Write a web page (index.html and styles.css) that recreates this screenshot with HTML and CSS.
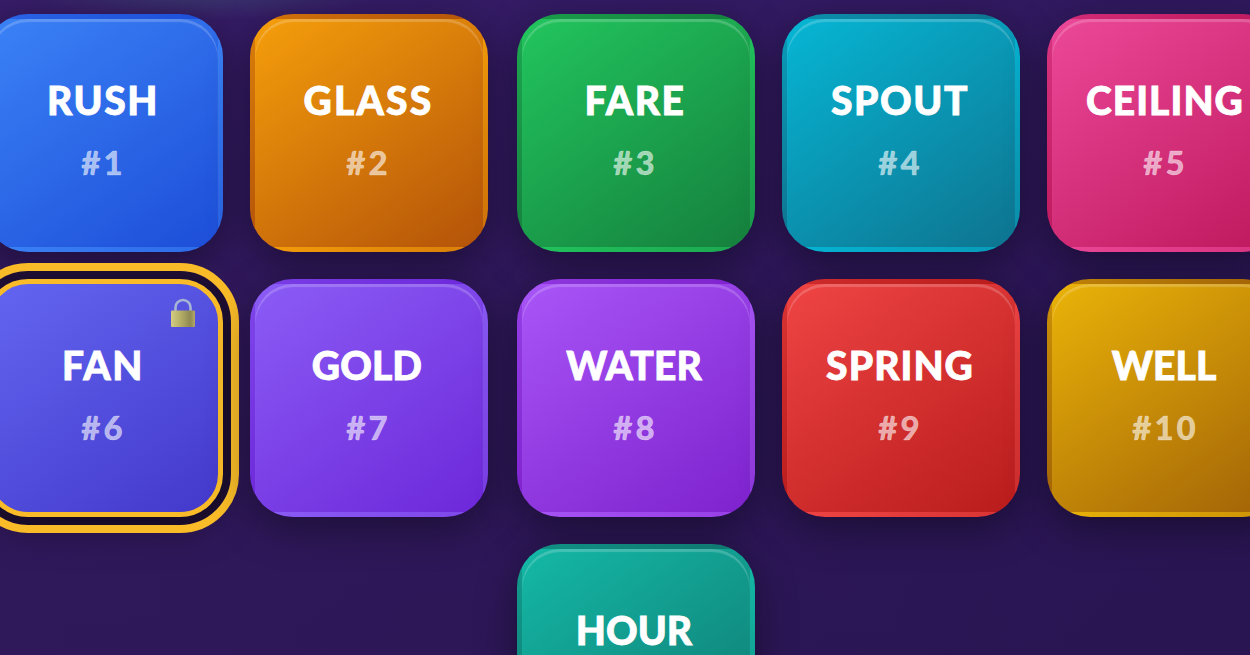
FILE: index.html
```html
<!DOCTYPE html>
<html lang="en">
<head>
<meta charset="utf-8">
<title>Word tiles</title>
<link rel="stylesheet" href="styles.css">
</head>
<body>
<main class="board">
  <div class="tile blue"><span class="word">RUSH</span><span class="num">#1</span></div>
  <div class="tile amber"><span class="word loose">GLASS</span><span class="num">#2</span></div>
  <div class="tile green"><span class="word">FARE</span><span class="num">#3</span></div>
  <div class="tile cyan"><span class="word">SPOUT</span><span class="num">#4</span></div>
  <div class="tile pink"><span class="word snug">CEILING</span><span class="num">#5</span></div>
  <div class="tile indigo selected"><span class="word">FAN</span><span class="num">#6</span>
    <svg class="lock" viewBox="0 0 28 30">
      <defs><linearGradient id="brass" x1="0" x2="1" y1="0" y2="0"><stop offset="0" stop-color="#d3cc83"/><stop offset=".35" stop-color="#b9b269"/><stop offset=".8" stop-color="#8f8852"/><stop offset="1" stop-color="#b3a968"/></linearGradient></defs>
      <path d="M6.500 14V9.500a7.500 7.500 0 0 1 15 0V14" fill="none" stroke="#a7b4d6" stroke-width="2.600"/>
      <rect x="2" y="12.500" width="24" height="16.500" rx="1" fill="url(#brass)"/>
    </svg>
  </div>
  <div class="tile violet"><span class="word tight">GOLD</span><span class="num">#7</span></div>
  <div class="tile purple"><span class="word tight">WATER</span><span class="num">#8</span></div>
  <div class="tile red"><span class="word snug">SPRING</span><span class="num">#9</span></div>
  <div class="tile yellow"><span class="word tight">WELL</span><span class="num">#10</span></div>
  <div class="tile teal last"><span class="word tight">HOUR</span></div>
</main>
</body>
</html>
```
FILE: styles.css
```css
* { box-sizing: border-box; }
body {
  margin: 0;
  height: 655px;
  overflow: hidden;
  font-family: Lato, "Liberation Sans", sans-serif;
  background:
    radial-gradient(ellipse 180px 24px at 200px -4px, rgba(64, 105, 120, .32), transparent),
    linear-gradient(100deg, rgba(60, 30, 110, .25), rgba(30, 15, 70, .25)),
    linear-gradient(#351c66 0, #2f1859 45%, #2c1755 100%);
}
.board {
  display: grid;
  grid-template-columns: 238px 240px 238px 238px 238px;
  grid-auto-rows: 238px;
  gap: 27px;
  margin-left: -15.500px;
  padding-top: 13.500px;
  width: 1310px;
  height: 655px;
}
.tile {
  position: relative;
  width: 238px;
  height: 238px;
  border: 5px solid transparent;
  border-radius: 43px;
  padding-top: 57px;
  display: flex;
  flex-direction: column;
  align-items: center;
  color: #fff;
  background-image: linear-gradient(145deg, var(--from), var(--to));
  box-shadow: 0 11px 40px rgba(0, 0, 0, .4), inset 0 3px 1px rgba(255, 255, 255, .2);
}
.word {
  font-size: 39px;
  line-height: 48px;
  font-weight: 900;
  white-space: nowrap;
  letter-spacing: 1.600px;
  margin-right: 1px;
  -webkit-text-stroke: .8px #fff;
}
.loose { letter-spacing: 2.200px; margin-right: 0; }
.snug { letter-spacing: 1.050px; }
.tight { letter-spacing: .100px; margin-right: 3px; }
.num {
  margin-top: 18px;
  font-size: 33px;
  line-height: 40px;
  font-weight: 900;
  letter-spacing: 3px;
  color: rgba(255, 255, 255, .62);
  -webkit-text-stroke: .4px rgba(255, 255, 255, .4);
}
.blue { --from: #3b82f6; --to: #1d4ed8; }
.amber { --from: #f59e0b; --to: #b45309; }
.green { --from: #22c55e; --to: #15803d; }
.cyan { --from: #06b6d4; --to: #0e7490; }
.pink { --from: #ec4899; --to: #be185d; }
.indigo { --from: #6366f1; --to: #4338ca; }
.violet { --from: #8b5cf6; --to: #6d28d9; }
.purple { --from: #a855f7; --to: #7e22ce; }
.red { --from: #ef4444; --to: #b91c1c; }
.yellow { --from: #eab308; --to: #a16207; }
.teal { --from: #14b8a6; --to: #0f766e; }
.last { grid-column: 3; }
.selected {
  border-color: #f9bc28;
  outline: 8px solid #f9bc28;
  outline-offset: 8px;
  box-shadow: 0 11px 40px rgba(0, 0, 0, .4), 0 0 0 8px #201036;
}
.lock {
  position: absolute;
  top: 14px;
  right: 21px;
  width: 28px;
  height: 30px;
}
```
